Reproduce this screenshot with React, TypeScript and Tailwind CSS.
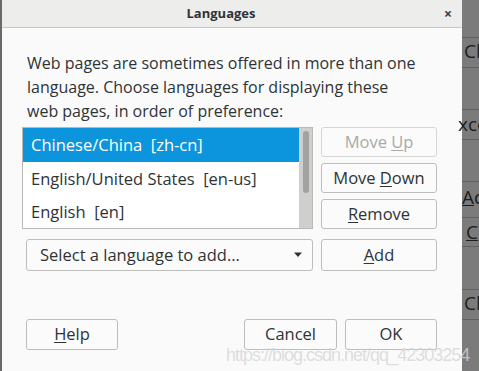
import React from "react";

const font = { fontFamily: '"Open Sans", "DejaVu Sans", sans-serif' };

function Btn({ children, disabled, className = "" }: { children: React.ReactNode; disabled?: boolean; className?: string }) {
  return (
    <div
      className={`flex items-center justify-center rounded-[3px] border bg-[#fbfbfb] text-[16.5px] ${
        disabled ? "border-[#d6d6d4] text-[#a8aaa8]" : "border-[#bdbdba] text-[#2e3436]"
      } ${className}`}
    >
      <span className="whitespace-pre">{children}</span>
    </div>
  );
}

export default function App() {
  return (
    <div className="relative flex h-[371px] w-[479px] overflow-hidden bg-[#7b7b7b]" style={font}>
      {/* left strip */}
      <div className="h-full w-[2px] bg-[#6a6a6a]" />
      {/* dialog */}
      <div className="flex h-full w-[460px] flex-col bg-[#fafafa]">
        <div className="relative flex h-[28px] items-center justify-center border-b border-[#c8c8c6] bg-[#ededec] pr-[22px]">
          <span className="text-[13px] font-bold text-[#2e3436]">Languages</span>
          <span className="absolute right-[10px] top-[3px] text-[14px] font-bold text-[#3b4144]">×</span>
        </div>
        <div className="flex flex-1 flex-col pl-[20px] pr-[25px] pt-[23px]">
          <p className="pl-[5px] text-[16px] leading-[24px] text-[#2e3436]">
            Web pages are sometimes offered in more than one
            <br />
            language. Choose languages for displaying these
            <br />
            web pages, in order of preference:
          </p>
          <div className="mt-[4px] flex gap-[8px]">
            <div className="flex h-[102px] w-[291px] border border-[#b8b8b5] bg-white">
              <div className="flex flex-1 flex-col text-[16.5px] text-[#2e3436]">
                <div className="flex h-[34px] items-center bg-[#0c95dc] pl-[8px] text-white">Chinese/China&nbsp;&nbsp;[zh-cn]</div>
                <div className="flex h-[34px] items-center pl-[8px]">English/United States&nbsp;&nbsp;[en-us]</div>
                <div className="flex h-[32px] items-center pl-[8px]">English&nbsp;&nbsp;[en]</div>
              </div>
              <div className="flex w-[13px] justify-center bg-[#cfcfcd] pt-[3px]">
                <div className="h-[62px] w-[6px] rounded-full bg-[#a2a2a0]" />
              </div>
            </div>
            <div className="flex flex-1 flex-col gap-[6px]">
              <Btn disabled className="h-[30px]">Move <u className="underline-offset-2">U</u>p</Btn>
              <Btn className="h-[30px]">Move <u className="underline-offset-2">D</u>own</Btn>
              <Btn className="h-[30px]"><u className="underline-offset-2">R</u>emove</Btn>
            </div>
          </div>
          <div className="mt-[10px] flex gap-[8px] pl-[4px]">
            <div className="flex h-[32px] w-[287px] items-center justify-between rounded-[3px] border border-[#bdbdba] bg-[#fbfbfb] pl-[13px] pr-[9px] text-[16.5px] text-[#2e3436]">
              <span>Select a language to add…</span>
              <svg width="10" height="6" viewBox="0 0 10 6"><path d="M1 0.5 L9 0.5 L5 5 Z" fill="#2e3436" /></svg>
            </div>
            <Btn className="h-[32px] flex-1"><u className="underline-offset-2">A</u>dd</Btn>
          </div>
          <div className="mt-[48px] flex items-center pl-[4px]">
            <Btn className="h-[31px] w-[92px]"><u className="underline-offset-2">H</u>elp</Btn>
            <div className="flex-1" />
            <Btn className="h-[31px] w-[93px]">Cancel</Btn>
            <Btn className="ml-[8px] h-[31px] w-[92px]">OK</Btn>
          </div>
        </div>
      </div>
      {/* right background window */}
      <div className="relative flex-1 text-[19px] text-[#1d1d1d]">
        <div className="absolute left-0 right-0 top-[37px] h-px bg-[#606060]" />
        <div className="absolute left-[2px] top-[39px] leading-[24px]">Cl</div>
        <div className="absolute left-0 right-0 top-[67px] h-px bg-[#606060]" />
        <div className="absolute left-0 right-0 top-[109px] h-px bg-[#606060]" />
        <div className="absolute left-[-4px] top-[112px] leading-[24px]">xce</div>
        <div className="absolute left-0 right-0 top-[139px] h-px bg-[#606060]" />
        <div className="absolute left-0 right-0 top-[181px] h-px bg-[#606060]" />
        <div className="absolute left-[0px] top-[185px] leading-[24px]"><u>A</u>dv</div>
        <div className="absolute left-0 right-0 top-[217px] h-px bg-[#606060]" />
        <div className="absolute left-[4px] top-[220px] leading-[24px]"><u>C</u></div>
        <div className="absolute left-0 right-0 top-[246px] h-px bg-[#606060]" />
        <div className="absolute left-0 right-0 top-[289px] h-px bg-[#606060]" />
        <div className="absolute left-[2px] top-[291px] leading-[24px]">Cl</div>
        <div className="absolute left-0 right-0 top-[319px] h-px bg-[#606060]" />
      </div>
      {/* watermark */}
      <div className="pointer-events-none absolute left-[226px] top-[342px] text-[18px] tracking-[-1px] text-[#d6d6d6]/80" style={{ fontFamily: '"Liberation Sans", Arial, sans-serif' }}>
        https://blog.csdn.net/qq_42303254
      </div>
    </div>
  );
}
